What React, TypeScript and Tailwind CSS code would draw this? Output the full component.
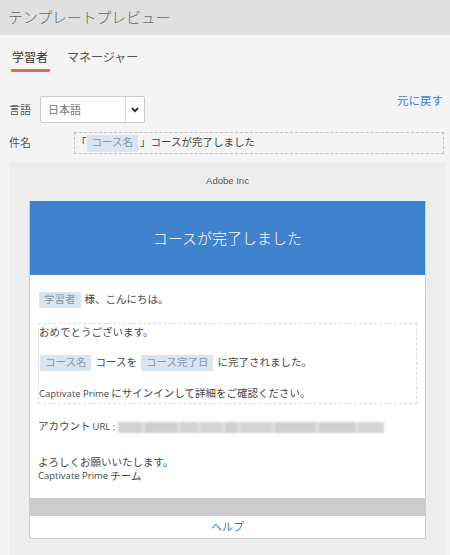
import React from "react";

const jp = { fontFamily: '"Open Sans", "Noto Sans CJK JP", sans-serif' };

function Token({ children, className = "" }: { children: React.ReactNode; className?: string }) {
  return (
    <span className={"inline-flex items-center h-[16px] px-[5px] bg-[#dbe5f1] text-[#8497ad] " + className}>
      {children}
    </span>
  );
}

function BlurUrl() {
  const segs: [number, string][] = [
    [24, "#d2d2d2"], [3, "#e2e2e2"], [32, "#cecece"], [3, "#e2e2e2"], [17, "#d3d3d3"], [3, "#e0e0e0"],
    [22, "#d5d5d5"], [3, "#e2e2e2"], [13, "#cfcfcf"], [3, "#e0e0e0"], [31, "#d4d4d4"], [3, "#e2e2e2"],
    [41, "#d1d1d1"], [3, "#dfdfdf"], [36, "#d0d0d0"], [3, "#e2e2e2"], [26, "#d6d6d6"],
  ];
  return (
    <span className="inline-flex h-[11px] w-[266px] blur-[0.8px] overflow-hidden">
      {segs.map(([w, c], i) => (
        <span key={i} style={{ width: w, background: c }} className="h-full shrink-0" />
      ))}
    </span>
  );
}

export default function App() {
  return (
    <div className="w-[450px] h-[555px] overflow-hidden bg-[#f4f4f4] text-[#444]" style={jp}>
      {/* header */}
      <div className="h-[35px] bg-[#e0e0e0] pl-[8px] flex items-center text-[15px] text-[#666] font-light tracking-[-0.2px]">
        テンプレートプレビュー
      </div>

      {/* tabs */}
      <div className="flex pl-[9px] pt-[13px] text-[12px]">
        <div className="flex flex-col items-center">
          <div className="h-[19px] leading-[19px] px-[3px] text-[#333]">学習者</div>
          <div className="h-[3px] w-[39px] bg-[#e8674b] rounded-[1px] mt-[2px]" />
        </div>
        <div className="h-[19px] leading-[19px] ml-[16px] text-[#555]">マネージャー</div>
      </div>

      {/* language row */}
      <div className="flex items-start mt-[24px] pl-[9px] pr-[7px] h-[27px]">
        <div className="text-[11px] text-[#555] w-[31px] h-[27px] leading-[27px]">言語</div>
        <div className="w-[105px] h-[27px] bg-white border border-[#cccccc] rounded-[2px] flex">
          <div className="flex-1 text-[11px] text-[#777] leading-[25px] pl-[7px]">日本語</div>
          <div className="w-[19px] border-l border-[#dddddd] flex items-center justify-center">
            <svg width="8" height="6" viewBox="0 0 8 6">
              <path d="M1 1.2 L4 4.2 L7 1.2" stroke="#222" strokeWidth="1.8" fill="none" />
            </svg>
          </div>
        </div>
        <div className="flex-1" />
        <div className="text-[11.5px] text-[#3b7bcc] leading-[12px] mt-[-1px]">元に戻す</div>
      </div>

      {/* subject row */}
      <div className="flex items-center mt-[9px] pl-[9px] pr-[6px]">
        <div className="text-[11px] text-[#555] w-[65px]">件名</div>
        <div className="flex-1 h-[22px] border border-dashed border-[#c4c4c4] flex items-center pl-[1px] text-[10.5px] text-[#444]">
          <span>「</span>
          <Token className="mr-[2px] h-[17px]">コース名</Token>
          <span>」コースが完了しました</span>
        </div>
      </div>

      {/* preview panel */}
      <div className="mt-[8px] ml-[9px] mr-[5px] bg-[#ededed] pl-[20px] pr-[19px]">
        <div className="h-[39px] flex items-center justify-center text-[9.5px] text-[#555]" style={{ fontFamily: '"Liberation Sans", Arial, sans-serif' }}>
          Adobe Inc
        </div>
        <div className="bg-white border border-[#cfcfcf] border-t-0">
          <div className="h-[74px] bg-[#3f83cf] flex items-center justify-center text-white text-[15px] font-light">
            コースが完了しました
          </div>
          <div className="px-[8px] pt-[17px] pb-[15px] text-[10.5px] text-[#484848]">
            <div className="h-[16px] flex items-center">
              <Token className="ml-[1px]">学習者</Token>
              <span className="ml-[4px]">様、こんにちは。</span>
            </div>
            <div className="mt-[15px] border border-dashed border-[#dcdcdc] pb-[1px]">
              <div className="h-[16px] mt-[1px] flex items-center">おめでとうございます。</div>
              <div className="h-[16px] mt-[14px] flex items-center">
                <Token className="ml-[1px]">コース名</Token>
                <span className="mx-[4px]">コースを</span>
                <Token>コース完了日</Token>
                <span className="ml-[4px]">に完了されました。</span>
              </div>
              <div className="h-[16px] mt-[15px] flex items-center">
                <span className="text-[9.5px]">Captivate Prime</span>
                <span className="ml-[2px]">にサインインして詳細をご確認ください。</span>
              </div>
            </div>
            <div className="h-[16px] mt-[15px] flex items-center">
              <span>アカウント</span>
              <span className="text-[9.5px] ml-[2px] mr-[3px]">URL :</span>
              <BlurUrl />
            </div>
            <div className="mt-[20px] leading-[14px]">よろしくお願いいたします。</div>
            <div className="leading-[14px] flex items-center">
              <span className="text-[9.5px]">Captivate Prime</span>
              <span className="ml-[2px]">チーム</span>
            </div>
          </div>
          <div className="h-[18px] bg-[#cccccc]" />
          <div className="h-[22px] flex items-center justify-center text-[11px] text-[#3b7bcc]">ヘルプ</div>
        </div>
        <div className="h-[20px]" />
      </div>
    </div>
  );
}
